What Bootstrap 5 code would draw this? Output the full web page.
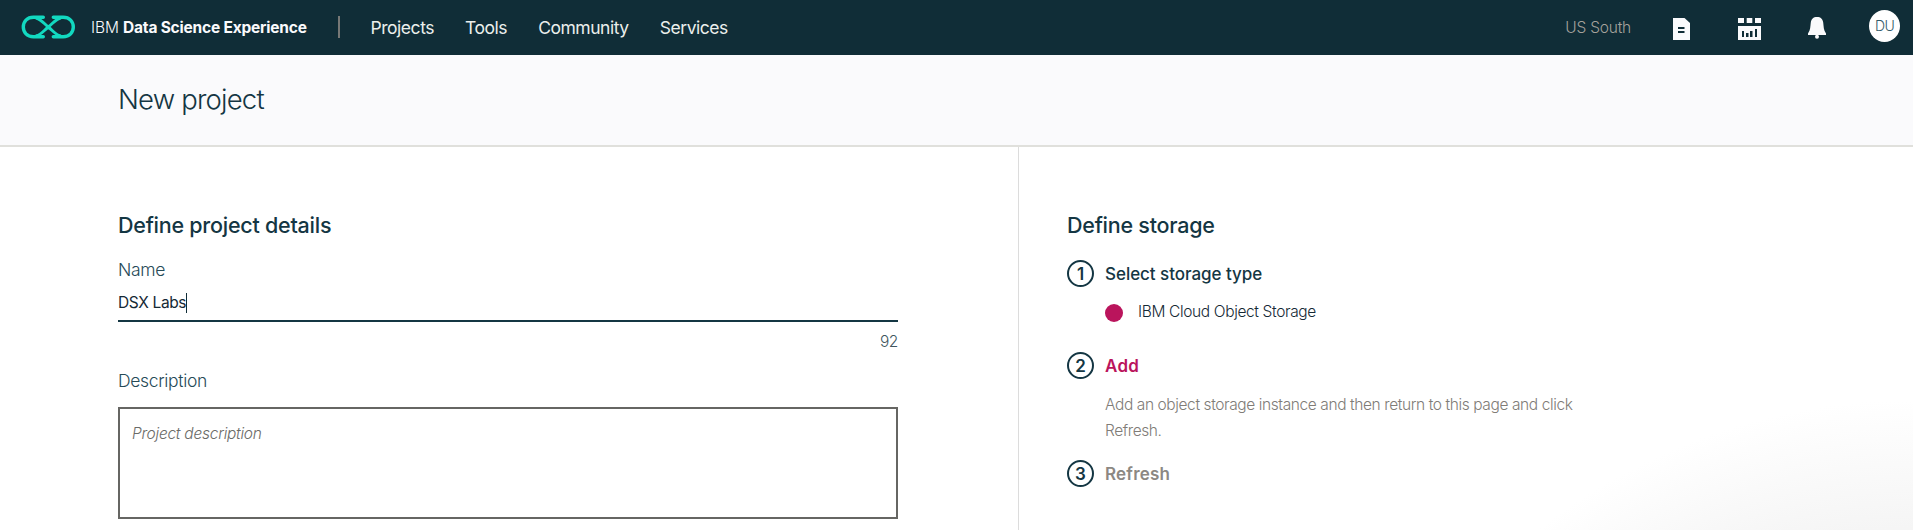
<!DOCTYPE html>
<html lang="en">
<head>
<meta charset="utf-8">
<meta name="viewport" content="width=device-width, initial-scale=1">
<title>New project</title>
<link href="https://cdn.jsdelivr.net/npm/bootstrap@5.3.0/dist/css/bootstrap.min.css" rel="stylesheet">
<style>
body{font-family:Inter,"Liberation Sans",sans-serif;font-weight:300;font-size:15.5px;line-height:24px;color:#152935;letter-spacing:-.36px;height:530px;overflow:hidden;background:#fff}
.topbar{height:55px;background:#102d37;color:#fafafc;padding:0 13px 0 21px}
.logo{margin-top:-1px}
.brand-text{margin-left:15px;width:216px;white-space:nowrap;letter-spacing:-.1px;padding-top:1px}
.brand-text b{font-weight:700;letter-spacing:-.2px}
.bar-sep{width:2px;height:22px;background:#777876;margin-left:31px;margin-top:-1px}
.topbar .nav{margin-left:30.5px;gap:31px}
.topbar .nav-link{font-size:17.5px;font-weight:400;color:#ebefec;padding:0;letter-spacing:-.46px}
.region{color:#a5a29c;letter-spacing:-.22px;padding-top:1px}
.ico-doc{margin:3px 0 0 42px}
.ico-catalog{margin:3px 0 0 48px}
.ico-bell{margin-left:47px}
.avatar{width:31px;height:32px;background:#fff;color:#325c6a;font-size:14px;letter-spacing:-.6px;margin:-3px 0 0 43px}
.page-head{height:92px;background:#fafafc;border-bottom:2px solid #e0e0dc;padding:27px 0 0 118px}
.page-head h1{font-size:27.5px;line-height:34px;font-weight:300;letter-spacing:-.81px;color:#143643}
.details{width:1018px;padding:65px 120px 0 118px}
.storage{padding:65px 0 0 48px;border-left:1px solid #dcdcdc;background:radial-gradient(circle 610px at 100% 863px,#f5f5f5 0,#f5f5f5 79%,#fff 100%)}
h2.sect{font-size:21.5px;line-height:26px;font-weight:500;color:#143643;letter-spacing:-.25px}
.fld-label{font-size:17.5px;color:#264a57;letter-spacing:-.34px}
.name-input{height:37px;border-bottom:2px solid #143643;font-weight:400}
.caret{width:1px;height:20px;background:#102d37}
.count{color:#40555d;margin-top:8px}
.desc-input{height:112px;border:2px solid #666663;padding:13px 12px;color:#6b6b68;font-style:italic;letter-spacing:-.25px}
.step{gap:11px}
.step-num{width:27px;height:27px;border:2px solid #143643;color:#143643;font-weight:600;font-size:17px;letter-spacing:0;flex:none}
.step-title{font-size:17px;font-weight:500;letter-spacing:-.04px;color:#143643;padding-top:1px}
.step-add{color:#ba145c;font-weight:600;letter-spacing:.3px}
.step-refresh{color:#8c8883;font-weight:600;letter-spacing:.2px}
.dot{width:18px;height:18px;background:#ba145c;margin-top:2px}
.step-body{padding-left:38px}
.help{line-height:26px;color:#807c77;font-weight:350;letter-spacing:-.4px;width:480px}
</style>
</head>
<body class="d-flex flex-column">
<header class="topbar d-flex align-items-center flex-shrink-0">
  <svg class="logo" width="55" height="24" viewBox="0 0 55 24" fill="none" stroke="#12d9c0" stroke-width="3.4" stroke-linecap="round" stroke-linejoin="round">
    <path d="M22.3 2.2H12.4C6 2.2 2.3 6.8 2.3 12s3.700 9.800 10.100 9.800H22.300"/>
    <path d="M32.300 2.200H42.200C48.600 2.200 52.300 6.800 52.300 12s-3.700 9.800-10.100 9.800H32.300"/>
    <path d="M15.500 3.200C19.500 4.200 21.500 7 27.300 12S35.100 19.800 39.100 20.800M39.100 3.200C35.100 4.200 33.100 7 27.300 12S19.500 19.800 15.500 20.800" stroke-width="3"/>
  </svg>
  <div class="brand-text">IBM <b>Data Science Experience</b></div>
  <div class="bar-sep"></div>
  <nav class="nav">
    <a class="nav-link" href="#">Projects</a>
    <a class="nav-link" href="#">Tools</a>
    <a class="nav-link" href="#">Community</a>
    <a class="nav-link" href="#">Services</a>
  </nav>
  <div class="d-flex align-items-center ms-auto">
    <span class="region">US South</span>
    <svg class="ico-doc" width="17" height="22" viewBox="0 0 17 22"><path fill="#fafafc" d="M0 0h11.500l5.500 5v17H0z"/><path fill="#102d37" d="M5 9h6.500v2H5zm0 4h6.500v2H5z"/></svg>
    <svg class="ico-catalog" width="23" height="22" viewBox="0 0 23 22"><path fill="#fafafc" d="M0 0h6v5H0zM8.700 0h5.600v5H8.700zM17 0h6v5h-6zM0 8h23v14H0z"/><path fill="#102d37" d="M4 13h2v6H4zm4 2h2.500v4H8zm4-2h2.500v6H12zm5-2h2v8h-2z"/></svg>
    <svg class="ico-bell" width="18" height="22" viewBox="0 0 18 22"><path fill="#fafafc" d="M9 0c3.800 0 5.700 2 6.200 5.500.6 4 .2 7.500 2.800 11V18H0v-1.500c2.600-3.500 2.200-7 2.800-11C3.300 2 5.200 0 9 0z"/><circle cx="9" cy="19.800" r="2" fill="#fafafc"/></svg>
    <span class="avatar rounded-circle d-flex align-items-center justify-content-center">DU</span>
  </div>
</header>
<div class="page-head flex-shrink-0"><h1 class="m-0">New project</h1></div>
<main class="d-flex flex-grow-1">
  <section class="details flex-shrink-0">
    <h2 class="sect m-0">Define project details</h2>
    <div class="fld-label" style="margin-top:20px">Name</div>
    <div class="name-input d-flex align-items-center" style="margin-top:3px"><span>DSX Labs</span><span class="caret"></span></div>
    <div class="count text-end">92</div>
    <div class="fld-label" style="margin-top:15px">Description</div>
    <div class="desc-input" style="margin-top:14px">Project description</div>
  </section>
  <section class="storage flex-grow-1">
    <h2 class="sect m-0">Define storage</h2>
    <div class="step d-flex align-items-center" style="margin-top:22px"><span class="step-num rounded-circle d-flex align-items-center justify-content-center">1</span><span class="step-title">Select storage type</span></div>
    <div class="step-body d-flex align-items-center" style="margin-top:13px;gap:15px"><span class="dot rounded-circle"></span><span>IBM Cloud Object Storage</span></div>
    <div class="step d-flex align-items-center" style="margin-top:28px"><span class="step-num rounded-circle d-flex align-items-center justify-content-center">2</span><span class="step-title step-add">Add</span></div>
    <div class="step-body" style="margin-top:13px"><div class="help">Add an object storage instance and then return to this page and click Refresh.</div></div>
    <div class="step d-flex align-items-center" style="margin-top:16px"><span class="step-num rounded-circle d-flex align-items-center justify-content-center">3</span><span class="step-title step-refresh">Refresh</span></div>
  </section>
</main>
<script src="https://cdn.jsdelivr.net/npm/bootstrap@5.3.0/dist/js/bootstrap.bundle.min.js"></script>
</body>
</html>
